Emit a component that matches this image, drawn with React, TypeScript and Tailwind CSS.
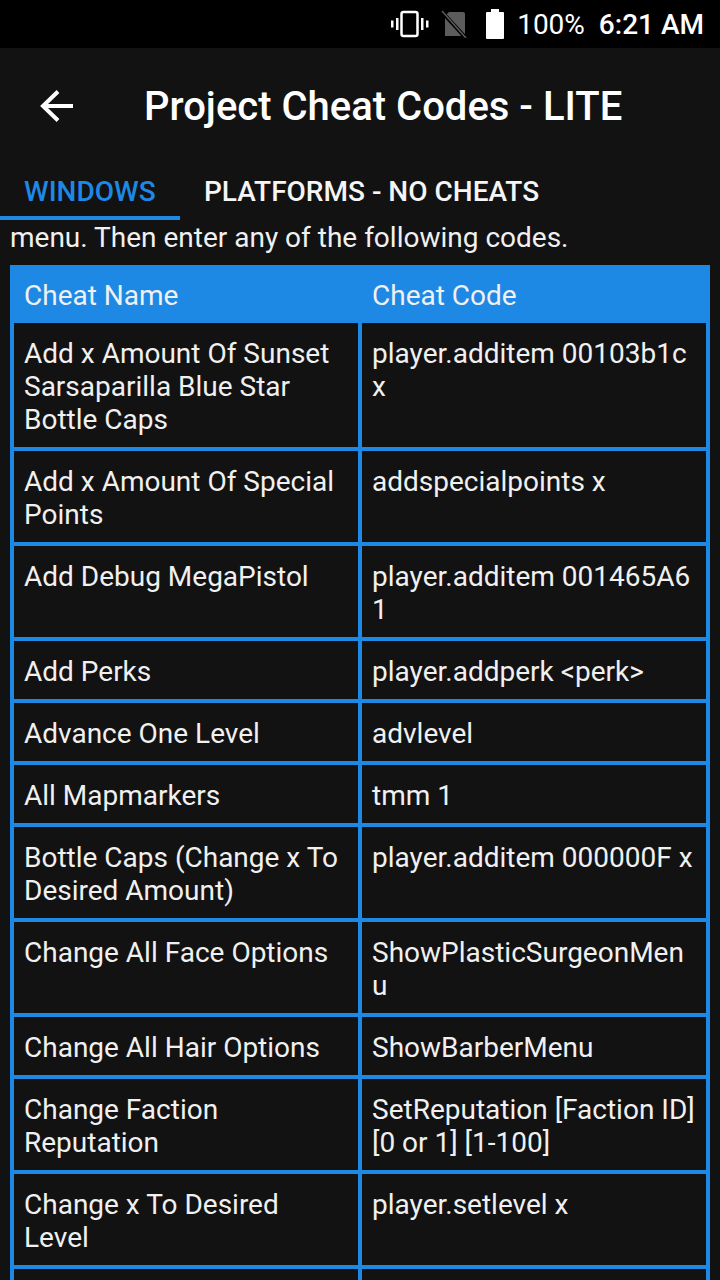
const rows: [string, string][] = [
  ['Add x Amount Of Sunset Sarsaparilla Blue Star Bottle Caps', 'player.additem 00103b1c x'],
  ['Add x Amount Of Special Points', 'addspecialpoints x'],
  ['Add Debug MegaPistol', 'player.additem 001465A6 1'],
  ['Add Perks', 'player.addperk <perk>'],
  ['Advance One Level', 'advlevel'],
  ['All Mapmarkers', 'tmm 1'],
  ['Bottle Caps (Change x To Desired Amount)', 'player.additem 000000F x'],
  ['Change All Face Options', 'ShowPlasticSurgeonMenu'],
  ['Change All Hair Options', 'ShowBarberMenu'],
  ['Change Faction Reputation', 'SetReputation [Faction ID] [0 or 1] [1-100]'],
  ['Change x To Desired Level', 'player.setlevel x'],
  ['', ''],
];

function StatusBar() {
  return (
    <div className="h-12 bg-black flex items-center justify-end pr-4 text-white">
      <svg width="38" height="28" viewBox="0 0 38 28" className="mr-[12px]" fill="white">
        <rect x="10.5" y="2" width="16" height="24" rx="2" fill="none" stroke="white" strokeWidth="2.5" />
        <rect x="5" y="8" width="2.5" height="12" />
        <rect x="0" y="10.5" width="2.5" height="7" />
        <rect x="30" y="8" width="2.5" height="12" />
        <rect x="35" y="10.5" width="2.5" height="7" />
      </svg>
      <svg width="26" height="28" viewBox="0 0 26 28" className="mr-[18px]">
        <path d="M8 2h14a2 2 0 0 1 2 2v22H4V6z" fill="#5c5c5c" />
        <path d="M1 2l23 25" stroke="#000" strokeWidth="4" />
        <path d="M1 1l24 27" stroke="#5c5c5c" strokeWidth="1.5" />
      </svg>
      <svg width="20" height="30" viewBox="0 0 20 30" className="mr-[12px]" fill="white">
        <path d="M6 0h8v3h4a1 1 0 0 1 1 1v25a1 1 0 0 1-1 1H2a1 1 0 0 1-1-1V4a1 1 0 0 1 1-1h4z" />
      </svg>
      <span className="text-[28px] leading-none mr-[14px] pt-[2px]">100%</span>
      <span className="text-[28px] leading-none font-medium pt-[2px]">6:21 AM</span>
    </div>
  );
}

export default function App() {
  return (
    <div className="h-[1280px] overflow-hidden bg-[#121212] text-white font-['Roboto',sans-serif]">
      <StatusBar />

      {/* App bar */}
      <div className="h-[116px] flex items-center">
        <svg width="34" height="34" viewBox="0 0 34 34" className="ml-[40px] mr-[70px]" fill="none" stroke="white" strokeWidth="4">
          <path d="M33 17H3" />
          <path d="M18 2.5L3 17l15 14.5" />
        </svg>
        <h1 className="text-[40px] font-medium leading-none whitespace-nowrap pt-[2px]">Project Cheat Codes - LITE</h1>
      </div>

      {/* Tabs */}
      <div className="h-14 flex">
        <div className="w-[180px] border-b-4 border-[#1e88e5] text-[#1e88e5] text-[28px] font-medium flex items-center pl-6 pt-1">
          WINDOWS
        </div>
        <div className="text-[28px] font-medium flex items-center pl-6 mb-1 pt-1 text-[#f5f5f5]">
          PLATFORMS - NO CHEATS
        </div>
      </div>

      {/* Content */}
      <p className="px-[10px] pt-[1px] text-[28px] leading-[33px] text-[#f0f0f0]">menu. Then enter any of the following codes.</p>

      <table className="mt-[11px] mx-[10px] w-[700px] table-fixed border-separate border-spacing-[4px] bg-[#1e88e5] text-[28px] leading-[33px] text-[#f0f0f0]">
        <thead>
          <tr>
            <th className="font-normal text-left px-[10px] pt-[2px] h-[50px]">Cheat Name</th>
            <th className="font-normal text-left px-[10px] pt-[2px] h-[50px]">Cheat Code</th>
          </tr>
        </thead>
        <tbody>
          {rows.map(([name, code], i) => (
            <tr key={i}>
              <td className="bg-[#121212] align-top px-[10px] pt-[14px] pb-[11px] break-words h-[58px]">{name}</td>
              <td className="bg-[#121212] align-top px-[10px] pt-[14px] pb-[11px] break-words h-[58px]">{code}</td>
            </tr>
          ))}
        </tbody>
      </table>
    </div>
  );
}
